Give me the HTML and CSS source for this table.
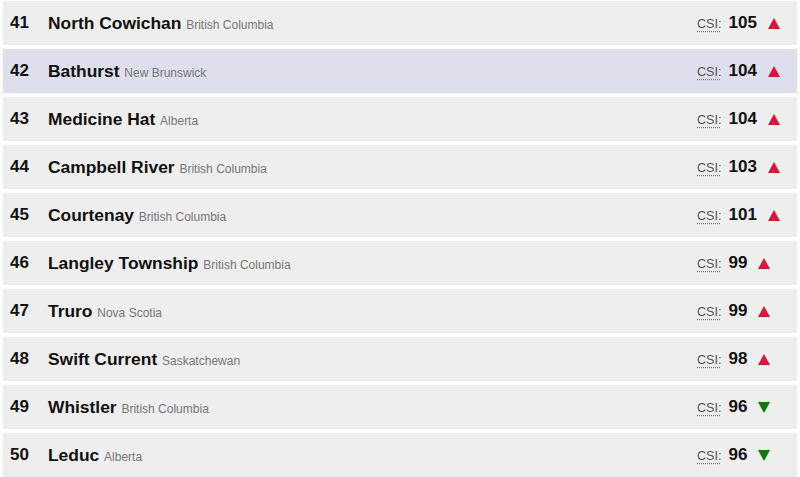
FILE: index.html
```html
<!DOCTYPE html>
<html>
<head>
<meta charset="utf-8">
<link rel="stylesheet" href="styles.css">
</head>
<body>
<ol class="list">
  <li class="row"><span class="rank">41</span><span class="name">North Cowichan <small class="prov">British Columbia</small></span><span class="score"><abbr class="csi" title="Crime Severity Index">CSI:</abbr> <b class="val">105</b><svg class="arrow up" viewBox="0 0 12 11"><path d="M6 0 L12 11 L0 11 Z"/></svg></span></li>
  <li class="row hl"><span class="rank">42</span><span class="name">Bathurst <small class="prov">New Brunswick</small></span><span class="score"><abbr class="csi" title="Crime Severity Index">CSI:</abbr> <b class="val">104</b><svg class="arrow up" viewBox="0 0 12 11"><path d="M6 0 L12 11 L0 11 Z"/></svg></span></li>
  <li class="row"><span class="rank">43</span><span class="name">Medicine Hat <small class="prov">Alberta</small></span><span class="score"><abbr class="csi" title="Crime Severity Index">CSI:</abbr> <b class="val">104</b><svg class="arrow up" viewBox="0 0 12 11"><path d="M6 0 L12 11 L0 11 Z"/></svg></span></li>
  <li class="row"><span class="rank">44</span><span class="name">Campbell River <small class="prov">British Columbia</small></span><span class="score"><abbr class="csi" title="Crime Severity Index">CSI:</abbr> <b class="val">103</b><svg class="arrow up" viewBox="0 0 12 11"><path d="M6 0 L12 11 L0 11 Z"/></svg></span></li>
  <li class="row"><span class="rank">45</span><span class="name">Courtenay <small class="prov">British Columbia</small></span><span class="score"><abbr class="csi" title="Crime Severity Index">CSI:</abbr> <b class="val">101</b><svg class="arrow up" viewBox="0 0 12 11"><path d="M6 0 L12 11 L0 11 Z"/></svg></span></li>
  <li class="row"><span class="rank">46</span><span class="name">Langley Township <small class="prov">British Columbia</small></span><span class="score"><abbr class="csi" title="Crime Severity Index">CSI:</abbr> <b class="val">99</b><svg class="arrow up" viewBox="0 0 12 11"><path d="M6 0 L12 11 L0 11 Z"/></svg></span></li>
  <li class="row"><span class="rank">47</span><span class="name">Truro <small class="prov">Nova Scotia</small></span><span class="score"><abbr class="csi" title="Crime Severity Index">CSI:</abbr> <b class="val">99</b><svg class="arrow up" viewBox="0 0 12 11"><path d="M6 0 L12 11 L0 11 Z"/></svg></span></li>
  <li class="row"><span class="rank">48</span><span class="name">Swift Current <small class="prov">Saskatchewan</small></span><span class="score"><abbr class="csi" title="Crime Severity Index">CSI:</abbr> <b class="val">98</b><svg class="arrow up" viewBox="0 0 12 11"><path d="M6 0 L12 11 L0 11 Z"/></svg></span></li>
  <li class="row"><span class="rank">49</span><span class="name">Whistler <small class="prov">British Columbia</small></span><span class="score"><abbr class="csi" title="Crime Severity Index">CSI:</abbr> <b class="val">96</b><svg class="arrow down" viewBox="0 0 12 11"><path d="M0 0 L12 0 L6 11 Z"/></svg></span></li>
  <li class="row"><span class="rank">50</span><span class="name">Leduc <small class="prov">Alberta</small></span><span class="score"><abbr class="csi" title="Crime Severity Index">CSI:</abbr> <b class="val">96</b><svg class="arrow down" viewBox="0 0 12 11"><path d="M0 0 L12 0 L6 11 Z"/></svg></span></li>
</ol>
</body>
</html>
```
FILE: styles.css
```css
html, body {
  margin: 0;
  padding: 0;
  background: #ffffff;
}
body {
  font-family: "Liberation Sans", Arial, sans-serif;
  color: #111111;
}
.list {
  list-style: none;
  margin: 0;
  padding: 1px 3px 0 3px;
  display: flex;
  flex-direction: column;
  gap: 4px;
}
.row {
  height: 44px;
  background: #eeeeee;
  display: flex;
  align-items: center;
}
.row.hl {
  background: #dedeed;
}
.rank {
  width: 38px;
  padding-left: 7px;
  font-size: 17px;
  font-weight: bold;
}
.name {
  flex: 1;
  font-size: 17.4px;
  font-weight: bold;
}
.prov {
  font-size: 12px;
  font-weight: normal;
  color: #777777;
}
.score {
  width: 100px;
  display: flex;
  align-items: baseline;
}
.csi {
  font-size: 12.6px;
  color: #555555;
  text-decoration: underline dotted #777777;
  text-underline-offset: 3px;
  margin-right: 7px;
}
.val {
  font-size: 17px;
  font-weight: bold;
}
.arrow {
  width: 12px;
  height: 11px;
  margin-left: 11px;
  position: relative;
  top: 1px;
}
.arrow.up { fill: #dc143c; }
.arrow.down { fill: #0a7d0a; }
```
